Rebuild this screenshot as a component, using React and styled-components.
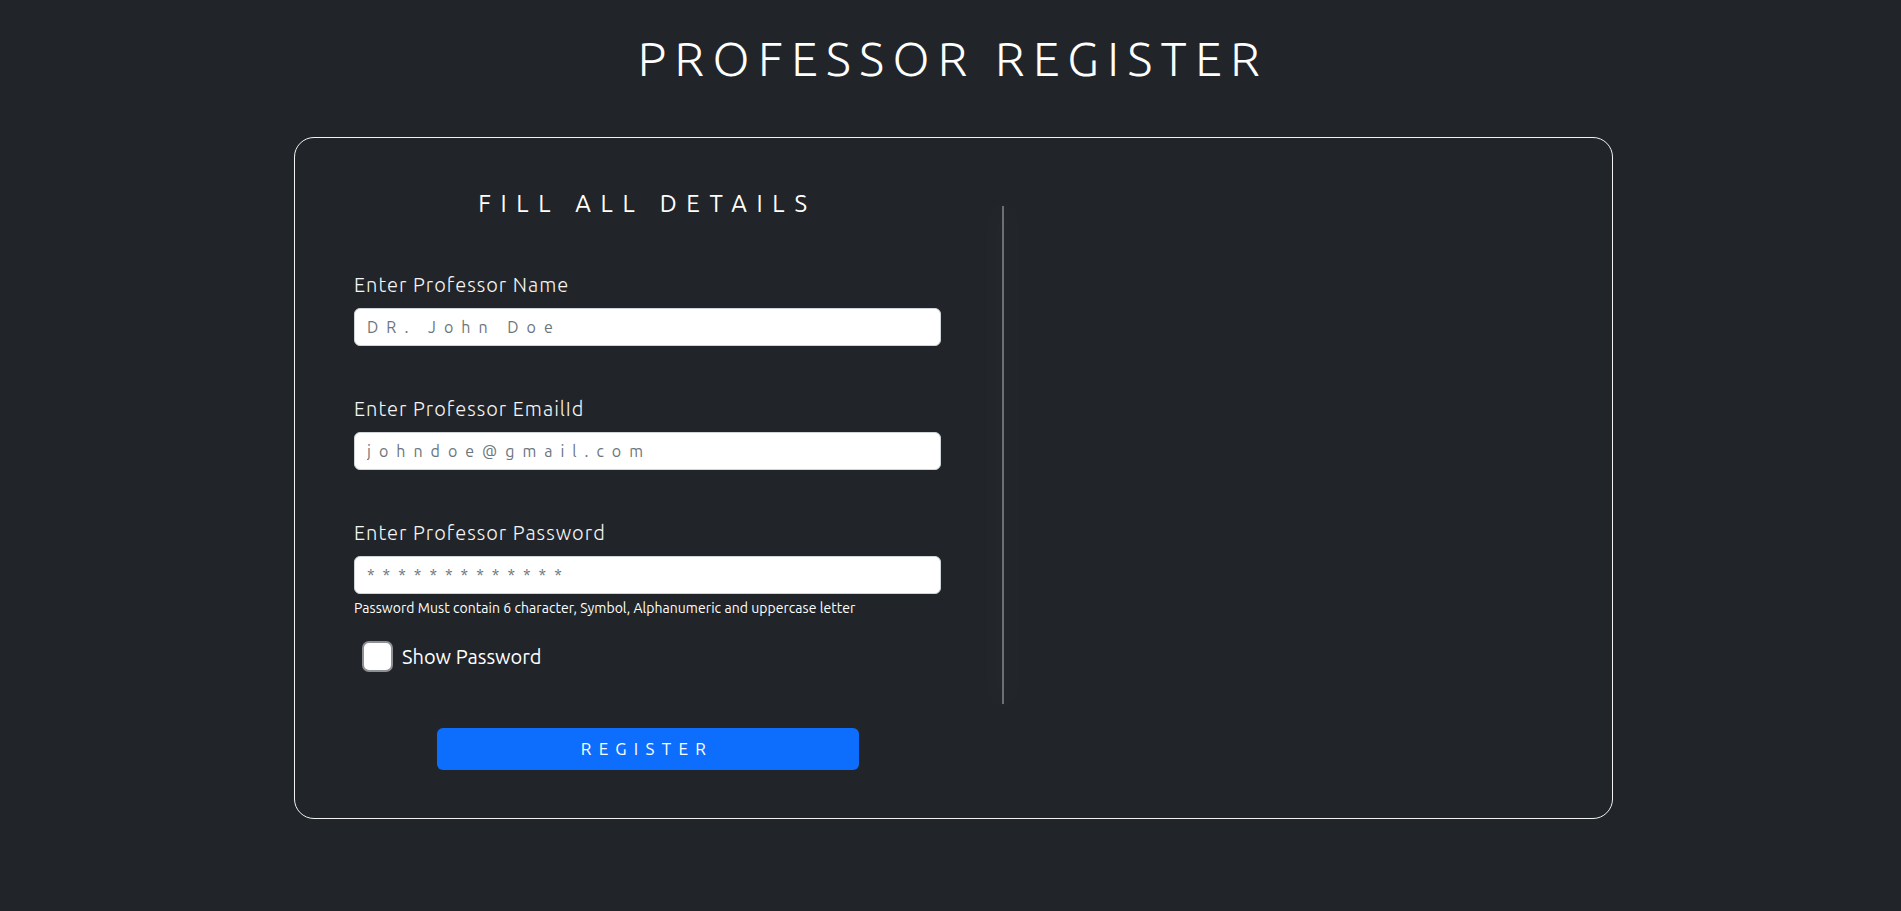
import styled, { createGlobalStyle } from "styled-components";
import { useState } from "react";

const GlobalStyle = createGlobalStyle`
  * { box-sizing: border-box; }
  body {
    margin: 0;
    background-color: #212529;
    color: #fff;
    font-family: "Ubuntu", "Open Sans", sans-serif;
  }
`;

const Page = styled.div`
  min-height: 100vh;
  background-color: #212529;
  padding: 30px 0 60px;
`;

const Title = styled.h1`
  margin: 0;
  text-align: center;
  font-size: 48px;
  font-weight: 300;
  line-height: 1.2;
  letter-spacing: 8.4px;
  padding-left: 5px;
  color: #fff;
`;

const CardWrapper = styled.div`
  display: flex;
  justify-content: center;
  padding-left: 6px;
  margin-top: 49px;
`;

const Card = styled.div`
  width: 1319px;
  border: 1px solid #f2f2f2;
  border-radius: 20px;
  padding: 52px 59px 48px;
`;

const Row = styled.div`
  display: flex;
  align-items: flex-start;
`;

const FormColumn = styled.div`
  width: 587px;
`;

const Divider = styled.div`
  width: 2px;
  height: 498px;
  margin: 16px 0 0 61px;
  background-color: #6c6f73;
  box-shadow: 0 0 30px 6px rgba(255, 255, 255, 0.035);
`;

const Heading = styled.h4`
  margin: 0 0 52px;
  text-align: center;
  font-size: 24px;
  font-weight: 400;
  line-height: 1.2;
  letter-spacing: 9.7px;
  color: #fff;
`;

const Field = styled.div`
  margin-bottom: ${(p) => (p.last ? "0" : "48px")};
`;

const Label = styled.label`
  display: block;
  margin-bottom: 8px;
  font-size: 20px;
  font-weight: 300;
  line-height: 30px;
  letter-spacing: 1px;
  color: #f6f6f6;
`;

const Input = styled.input`
  display: block;
  width: 100%;
  height: 38px;
  padding: 6px 12px;
  border: 1px solid #ced4da;
  border-radius: 6px;
  background: #fff;
  font-family: inherit;
  font-size: 16px;
  letter-spacing: 8px;
  color: #212529;
  outline: none;
  &::placeholder {
    color: #6c757d;
  }
`;

const HelpText = styled.div`
  margin-top: 4px;
  font-size: 14px;
  line-height: 21px;
  letter-spacing: 0.05px;
  color: #fff;
`;

const CheckRow = styled.label`
  display: flex;
  align-items: center;
  gap: 9px;
  margin: 22px 0 0 8px;
  cursor: pointer;
`;

const CheckBox = styled.input`
  appearance: none;
  width: 31px;
  height: 31px;
  margin: 0;
  border: 2px solid #8d9196;
  border-radius: 7px;
  background: #fff;
  cursor: pointer;
  &:checked {
    background: #0d6efd;
    border-color: #0d6efd;
  }
`;

const CheckText = styled.span`
  font-size: 20px;
  color: #fff;
`;

const ButtonRow = styled.div`
  width: 587px;
  display: flex;
  justify-content: center;
  margin-top: 24px;
`;

const Button = styled.button`
  width: 422px;
  height: 42px;
  border: none;
  border-radius: 6px;
  background-color: #0d6efd;
  color: #fff;
  font-family: inherit;
  font-size: 17px;
  font-weight: 400;
  letter-spacing: 7.3px;
  padding-left: 5px;
  cursor: pointer;
`;

export default function App() {
  const [show, setShow] = useState(false);
  return (
    <Page>
      <GlobalStyle />
      <Title>PROFESSOR REGISTER</Title>
      <CardWrapper>
        <Card>
          <Row>
            <FormColumn>
              <Heading>FILL ALL DETAILS</Heading>
              <Field>
                <Label>Enter Professor Name</Label>
                <Input type="text" placeholder="DR. John Doe" />
              </Field>
              <Field>
                <Label>Enter Professor EmailId</Label>
                <Input type="email" placeholder="johndoe@gmail.com" />
              </Field>
              <Field last>
                <Label>Enter Professor Password</Label>
                <Input type={show ? "text" : "password"} placeholder="*************" />
                <HelpText>Password Must contain 6 character, Symbol, Alphanumeric and uppercase letter</HelpText>
              </Field>
              <CheckRow>
                <CheckBox type="checkbox" checked={show} onChange={() => setShow(!show)} />
                <CheckText>Show Password</CheckText>
              </CheckRow>
            </FormColumn>
            <Divider />
          </Row>
          <ButtonRow>
            <Button>REGISTER</Button>
          </ButtonRow>
        </Card>
      </CardWrapper>
    </Page>
  );
}
